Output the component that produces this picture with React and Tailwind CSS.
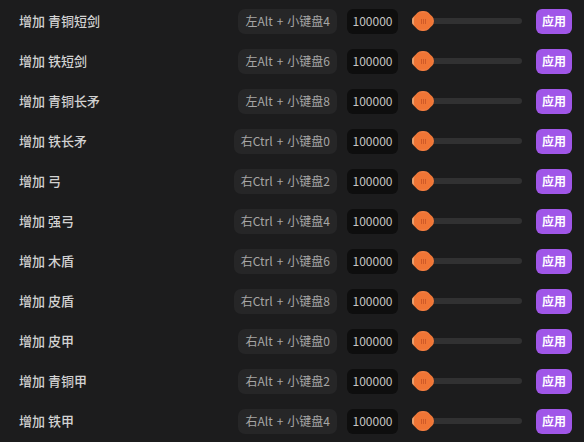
import React from "react";

const rows = [
  ["增加 青铜短剑", "左Alt", "小键盘4"],
  ["增加 铁短剑", "左Alt", "小键盘6"],
  ["增加 青铜长矛", "左Alt", "小键盘8"],
  ["增加 铁长矛", "右Ctrl", "小键盘0"],
  ["增加 弓", "右Ctrl", "小键盘2"],
  ["增加 强弓", "右Ctrl", "小键盘4"],
  ["增加 木盾", "右Ctrl", "小键盘6"],
  ["增加 皮盾", "右Ctrl", "小键盘8"],
  ["增加 皮甲", "右Alt", "小键盘0"],
  ["增加 青铜甲", "右Alt", "小键盘2"],
  ["增加 铁甲", "右Alt", "小键盘4"],
];

function Thumb() {
  return (
    <div className="absolute left-[-1px] top-1/2 -translate-y-1/2 w-[22px] h-[20px]">
      <div className="absolute inset-x-[3px] inset-y-0 rounded-[7px] bg-[#f07b3e]" />
      <div className="absolute inset-y-[3px] inset-x-0 rounded-[7px] bg-[#ef7a3c]" />
      <div className="absolute left-0 top-[6px] bottom-[6px] w-[3px] rounded-l-full bg-[#e9a06e]" />
      <div className="absolute inset-[2px] rounded-[6px] bg-[#f07535] flex items-center justify-center gap-[1px]">
        <span className="w-[1px] h-[5px] bg-[#cf5a28]" />
        <span className="w-[1px] h-[5px] bg-[#cf5a28]" />
        <span className="w-[1px] h-[5px] bg-[#cf5a28]" />
      </div>
    </div>
  );
}

export default function App() {
  return (
    <div
      className="w-[584px] h-[442px] bg-[#1c1c1d] pl-[19px] pr-[12px] pt-[1px] overflow-hidden"
      style={{ fontFamily: '"Noto Sans CJK SC", "Noto Sans", sans-serif' }}
    >
      {rows.map(([label, mod, key], i) => (
        <div key={i} className="h-[40px] flex items-center">
          <div className="flex-1 text-[13px] font-medium text-[#d2d2d2]">{label}</div>
          <div className="h-[25px] px-[7px] rounded-[7px] bg-[#262627] text-[12px] text-[#a6a6a6] flex items-center gap-[4px]">
            <span>{mod}</span>
            <span>+</span>
            <span>{key}</span>
          </div>
          <div className="ml-[10px] w-[51px] h-[25px] rounded-[6px] bg-[#0e0e0e] text-[12px] text-[#c4c4c4] flex items-center justify-center">
            100000
          </div>
          <div className="ml-[15px] relative w-[109px] h-[24px] flex items-center">
            <div className="ml-[8px] flex-1 h-[6px] rounded-full bg-[#313132]" />
            <Thumb />
          </div>
          <button className="ml-[14px] w-[36px] h-[25px] rounded-[6px] bg-[#a056e8] text-white text-[12px] font-semibold flex items-center justify-center">
            应用
          </button>
        </div>
      ))}
    </div>
  );
}
